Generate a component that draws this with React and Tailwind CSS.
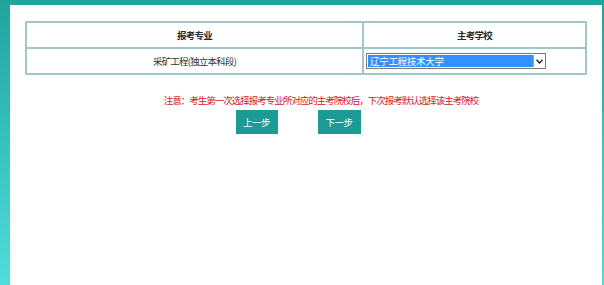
import React from "react";

const App = () => {
    return (
        <div
            className="h-[285px] w-[604px] overflow-hidden bg-gradient-to-b from-[#1fa39d] via-[#36c2c0] to-[#52dbdb] pl-[10px] pt-[5px] pr-[2px]"
            style={{ fontFamily: '"Noto Sans CJK SC", "Noto Sans", sans-serif' }}
        >
            <div className="h-[300px] bg-white pl-[15px] pt-[16px]">
                <table className="w-[562px] border-collapse text-[9.5px] tracking-[-0.8px] text-[#333]">
                    <tbody>
                        <tr className="h-[26px]">
                            <th className="w-[337px] border-2 border-[#9fc8c8] text-center font-bold text-[#2a2a2a]">报考专业</th>
                            <th className="border-2 border-[#9fc8c8] text-center font-bold text-[#2a2a2a]">主考学校</th>
                        </tr>
                        <tr className="h-[26px]">
                            <td className="border-2 border-[#9fc8c8] text-center">采矿工程(独立本科段)</td>
                            <td className="border-2 border-[#9fc8c8] pl-[2px]">
                                <div className="flex h-[16px] w-[180px] items-stretch border border-[#7a7a7a] bg-white p-[1px]">
                                    <div className="flex flex-1 items-center bg-[#3390ff] pl-[2px] tracking-[-0.3px] text-white">辽宁工程技术大学</div>
                                    <div className="flex w-[11px] items-center justify-center border-l border-[#a0a0a0] bg-white">
                                        <svg width="7" height="5" viewBox="0 0 7 5">
                                            <path d="M0.5 0.8 L3.5 4 L6.5 0.8" fill="none" stroke="#222" strokeWidth="1.4" />
                                        </svg>
                                    </div>
                                </div>
                            </td>
                        </tr>
                    </tbody>
                </table>
                <div className="mt-[18px] ml-[15px] w-[562px] text-center text-[9.5px] tracking-[-1px] text-[#d42020]">
                    注意：考生第一次选择报考专业所对应的主考院校后，下次报考默认选择该主考院校
                </div>
                <div className="mt-[3px] flex w-[562px] justify-center gap-[40px] pr-[16px]">
                    <button className="h-[24px] w-[42px] bg-[#1c9a95] text-[9.5px] tracking-[-0.5px] text-white">上一步</button>
                    <button className="h-[24px] w-[43px] bg-[#1c9a95] text-[9.5px] tracking-[-0.5px] text-white">下一步</button>
                </div>
            </div>
        </div>
    );
};

export default App;
